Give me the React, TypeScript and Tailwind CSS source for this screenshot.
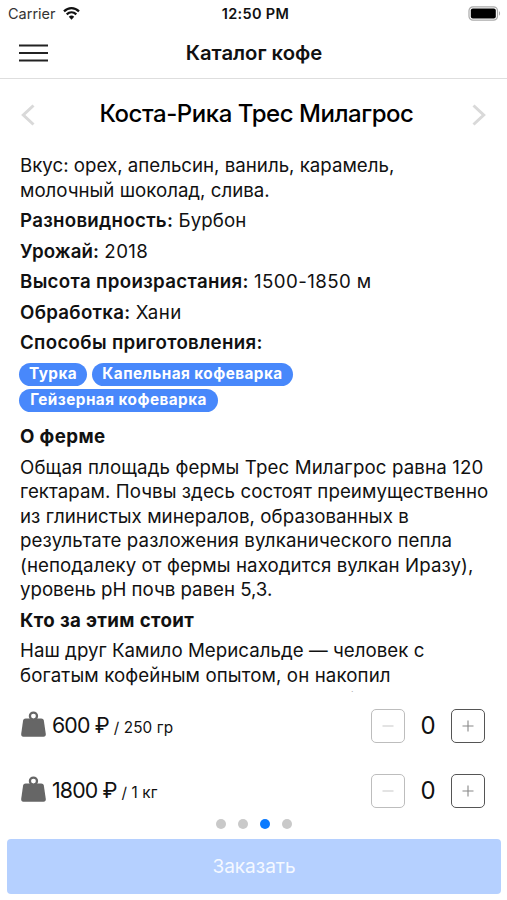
import type { ReactNode } from "react";

function Line({ children, className = "" }: { children: ReactNode; className?: string }) {
  return <span className={"block whitespace-nowrap " + className}>{children}</span>;
}

function Chevron({ right = false }: { right?: boolean }) {
  return (
    <svg width="14" height="22" viewBox="0 0 14 22" fill="none" stroke="#d9d9d9" strokeWidth="3">
      <path d={right ? "M1.5 1.5 L11.7 11 L1.5 20.5" : "M12.5 1.5 L2.3 11 L12.5 20.5"} />
    </svg>
  );
}

function Tag({ children, width }: { children: ReactNode; width: string }) {
  return (
    <span className={"flex h-[23px] items-center justify-center rounded-full bg-[#4888fb] pt-px text-[15.3px] font-bold tracking-[0.45px] whitespace-nowrap text-white " + width}>
      {children}
    </span>
  );
}

function Weight() {
  return (
    <svg width="25" height="26" viewBox="0 0 25.3 26" className="mb-[3px] shrink-0">
      <path d="M4.8 7.4H20.4C22 7.4 22.8 8.1 23.1 9.5L25.1 23.2C25.3 24.8 24.4 25.8 22.8 25.8H2.4C.8 25.8 0 24.8.2 23.2L2.1 9.5C2.4 8.1 3.2 7.4 4.8 7.4Z" fill="#666" />
      <circle cx="12.6" cy="5" r="3.6" fill="#fff" stroke="#666" strokeWidth="2.3" />
    </svg>
  );
}

function Stepper({ plus = false }: { plus?: boolean }) {
  return (
    <button className={"flex size-[34px] items-center justify-center rounded-[5px] border-[1.5px] " + (plus ? "border-[#555] text-[#888]" : "border-[#bdbdbd] text-[#ccc]")}>
      <svg width="12" height="12" viewBox="0 0 12 12" stroke="currentColor" strokeWidth="1.1">
        <path d={plus ? "M.5 6H11.5M6 .5V11.5" : "M.5 6H11.5"} />
      </svg>
    </button>
  );
}

function Price({ price, unit }: { price: string; unit: string }) {
  return (
    <div className="flex h-[65px] items-center pr-[22px] pl-[21px]">
      <Weight />
      <div className="ml-[6px] flex items-baseline whitespace-nowrap">
        <span className="text-[21.3px] tracking-[-0.85px]">{price}</span>
        <span className="ml-[5px] text-[15.3px] tracking-[0.1px]">{unit}</span>
      </div>
      <div className="ml-auto flex items-center">
        <Stepper />
        <span className="w-[46px] text-center text-[24px]">0</span>
        <Stepper plus />
      </div>
    </div>
  );
}

export default function App() {
  return (
    <div className="flex h-[900px] w-[507px] flex-col overflow-hidden bg-white font-['Inter','Noto_Sans',sans-serif] text-[#111]">
      <header className="flex h-[79px] flex-col border-b border-[#dedede]">
        <div className="grid h-[27px] grid-cols-3 items-center pr-[6px] pl-[8px] text-[14.5px]">
          <div className="flex items-center gap-[7px]">
            <span className="text-[#333]">Carrier</span>
            <svg width="17" height="13" viewBox="0 0 17 13" fill="none" stroke="#111" strokeWidth="2.2">
              <path d="M1 4.4C5.3.1 11.7.1 16 4.4M3.7 7.4C6.5 4.7 10.5 4.7 13.3 7.4" />
              <path d="M5.8 9.7C7.5 8.1 9.5 8.1 11.2 9.7L8.5 12.7Z" fill="#111" stroke="none" />
            </svg>
          </div>
          <span className="pl-[2px] text-center font-semibold tracking-[0.3px] whitespace-nowrap">12:50 PM</span>
          <svg className="ml-auto" width="33" height="15" viewBox="0 0 33 15">
            <rect x="1" y=".8" width="28.5" height="13.4" rx="4" fill="#fff" stroke="#aaa" strokeWidth="1.2" />
            <rect x="2.8" y="2.6" width="25" height="9.8" rx="2" fill="#000" />
            <path d="M31 5.3C32.4 5.8 32.4 9.2 31 9.7Z" fill="#aaa" />
          </svg>
        </div>
        <div className="grid flex-1 grid-cols-[60px_1fr_60px] items-center">
          <svg className="ml-[19px]" width="29" height="18" viewBox="0 0 29 18" stroke="#222" strokeWidth="2.2">
            <path d="M0 1.5H29M0 9H29M0 16.5H29" />
          </svg>
          <h1 className="pt-px pl-px text-center text-[20.3px] font-semibold whitespace-nowrap">Каталог кофе</h1>
        </div>
      </header>

      <div className="flex h-[71px] shrink-0 items-center justify-between px-[21px]">
        <Chevron />
        <h2 className="pb-[2px] pl-[6px] text-[24px] font-medium tracking-[-0.45px] whitespace-nowrap text-black">Коста-Рика Трес Милагрос</h2>
        <Chevron right />
      </div>

      <main className="h-[542px] shrink-0 overflow-hidden px-[20px] pt-[4px] text-[18.7px] leading-[24.5px]">
        <div className="flex flex-col gap-[6px]">
          <p>
            <Line>Вкус: орех, апельсин, ваниль, карамель,</Line>
            <Line>молочный шоколад, слива.</Line>
          </p>
          <Line><b className="font-semibold tracking-[0.28px]">Разновидность:</b> <span className="tracking-[0.1px]">Бурбон</span></Line>
          <Line><b className="font-semibold tracking-[0.1px]">Урожай:</b> <span className="tracking-[0.4px]">2018</span></Line>
          <Line><b className="font-semibold tracking-[0.33px]">Высота произрастания:</b> <span className="tracking-[0.4px]">1500-1850 м</span></Line>
          <Line><b className="font-semibold tracking-[0.28px]">Обработка:</b> <span className="tracking-[0.4px]">Хани</span></Line>
          <Line className="font-semibold tracking-[0.32px]">Способы приготовления:</Line>
        </div>
        <div className="mt-[7px] -ml-px flex flex-col gap-[3px]">
          <div className="flex gap-[5px]">
            <Tag width="w-[68px]">Турка</Tag>
            <Tag width="w-[201px]">Капельная кофеварка</Tag>
          </div>
          <Tag width="w-[199px]">Гейзерная кофеварка</Tag>
        </div>
        <div className="mt-[13px] flex flex-col gap-[6px]">
          <h3 className="font-bold tracking-[0.4px]">О ферме</h3>
          <p className="mt-[0.6px]">
            <Line className="tracking-[0.12px]">Общая площадь фермы Трес Милагрос равна 120</Line>
            <Line className="tracking-[0.06px]">гектарам. Почвы здесь состоят преимущественно</Line>
            <Line className="tracking-[0.05px]">из глинистых минералов, образованных в</Line>
            <Line className="tracking-[0.12px]">результате разложения вулканического пепла</Line>
            <Line className="tracking-[0.07px]">(неподалеку от фермы находится вулкан Иразу),</Line>
            <Line className="tracking-[-0.03px]">уровень pH почв равен 5,3.</Line>
          </p>
          <h3 className="font-bold tracking-[0.37px]">Кто за этим стоит</h3>
          <p>
            <Line className="tracking-[0.03px]">Наш друг Камило Мерисальде — человек с</Line>
            <Line className="tracking-[0.11px]">богатым кофейным опытом, он накопил</Line>
            <Line className="tracking-[0.1px]">и ценные профессиональные и глубокие</Line>
          </p>
        </div>
      </main>

      <section className="pt-px">
        <Price price="600 ₽" unit="/ 250 гр" />
        <Price price="1800 ₽" unit="/ 1 кг" />
      </section>

      <div className="-mt-[4px] flex justify-center gap-[12px]">
        <span className="size-[10px] rounded-full bg-[#c9c9c9]" />
        <span className="size-[10px] rounded-full bg-[#c9c9c9]" />
        <span className="size-[10px] rounded-full bg-[#0a7aff]" />
        <span className="size-[10px] rounded-full bg-[#c9c9c9]" />
      </div>
      <button className="mr-[6px] ml-[7px] mt-[10px] h-[55px] shrink-0 rounded-[4px] bg-[#b5d0ff] pt-[2px] text-[19px] text-[#f4f8ff]">Заказать</button>
    </div>
  );
}
